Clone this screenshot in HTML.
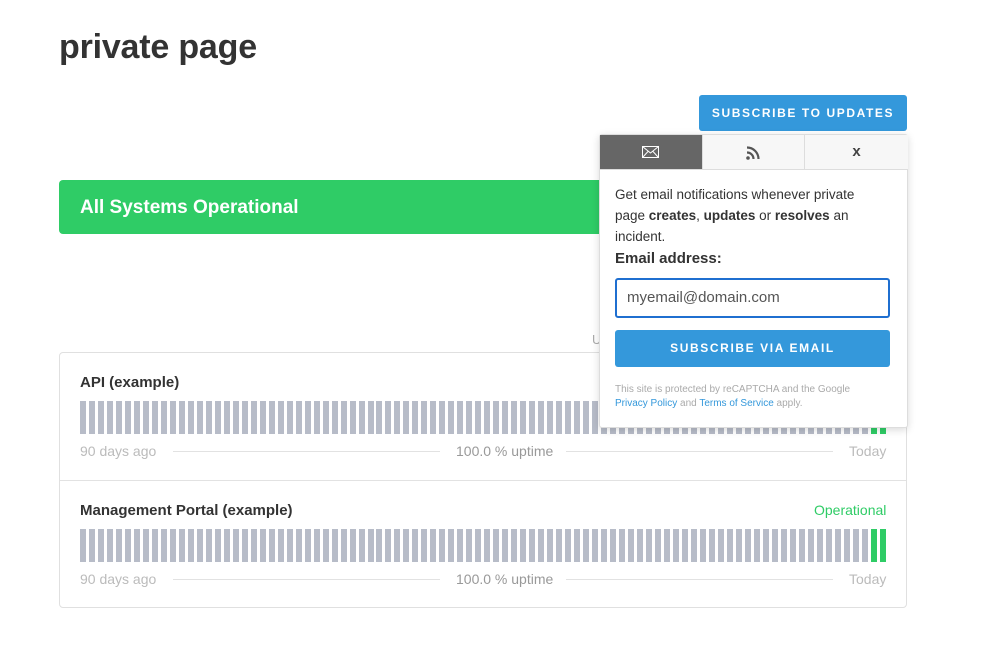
<!DOCTYPE html>
<html><head><meta charset="utf-8"><style>
body{margin:0;width:999px;height:658px;background:#fff;font-family:"Liberation Sans",sans-serif;position:relative;overflow:hidden;color:#333}
.a{position:absolute}
h1{position:absolute;left:59px;top:28px;margin:0;font-size:34px;font-weight:bold;color:#333;letter-spacing:-0.2px}
.btn{background:#3498db;color:#fff;font-weight:bold;letter-spacing:1.6px;text-align:center;border-radius:3px}
.bars{position:absolute;left:80px;width:806px;height:33px;display:flex;justify-content:space-between}
.bars span{width:6px;height:33px;background:#b7bcc8}
.bars span.g{background:#2fcc66}
.lbl{font-size:14px;color:#bbb}
.line{position:absolute;height:1px;background:#e2e2e2}
</style></head><body>
<h1>private page</h1>
<div class="a btn" style="left:699px;top:95px;width:208px;height:36px;line-height:36px;font-size:12px">SUBSCRIBE TO UPDATES</div>
<div class="a" style="left:59px;top:180px;width:848px;height:54px;background:#2fcc66;border-radius:4px"></div>
<div class="a" style="left:80px;top:197px;color:#fff;font-size:19px;font-weight:bold">All Systems Operational</div>
<div class="a" style="left:592px;top:332px;font-size:13px;color:#aaa">Uptime</div>
<div class="a" style="left:59px;top:352px;width:846px;height:254px;border:1px solid #e0e0e0;border-radius:4px"></div>
<div class="line" style="left:60px;top:480px;width:846px"></div>
<div class="a" style="left:80px;top:374px;font-size:15px;font-weight:bold">API (example)</div>
<div class="bars" id="b1" style="top:401px"></div>
<div class="a lbl" style="left:80px;top:443px">90 days ago</div>
<div class="line" style="left:173px;top:451px;width:267px"></div>
<div class="a lbl" style="left:456px;top:443px;color:#999">100.0 % uptime</div>
<div class="line" style="left:566px;top:451px;width:267px"></div>
<div class="a lbl" style="left:849px;top:443px">Today</div>
<div class="a" style="left:80px;top:502px;font-size:15px;font-weight:bold">Management Portal (example)</div>
<div class="a" style="left:814px;top:502px;font-size:14px;color:#2fcc66">Operational</div>
<div class="bars" id="b2" style="top:529px"></div>
<div class="a lbl" style="left:80px;top:571px">90 days ago</div>
<div class="line" style="left:173px;top:579px;width:267px"></div>
<div class="a lbl" style="left:456px;top:571px;color:#999">100.0 % uptime</div>
<div class="line" style="left:566px;top:579px;width:267px"></div>
<div class="a lbl" style="left:849px;top:571px">Today</div>

<div class="a" style="left:599px;top:134px;width:307px;height:292px;background:#fff;border:1px solid #ddd;border-radius:3px;box-shadow:0 2px 8px rgba(0,0,0,.15)">
 <div class="a" style="left:0;top:0;width:102px;height:34px;background:#666;border-bottom:1px solid #ddd">
  <svg class="a" style="left:42px;top:11px" width="17" height="12" viewBox="0 0 17 12"><rect x="0.5" y="0.5" width="16" height="11" fill="none" stroke="#fff"/><path d="M0.5 0.5L8.5 7L16.5 0.5M0.5 11.5L6 5.5M16.5 11.5L11 5.5" fill="none" stroke="#fff"/></svg>
 </div>
 <div class="a" style="left:102px;top:0;width:102px;height:34px;background:#f7f7f7;border-left:1px solid #ddd;border-bottom:1px solid #ddd">
  <svg class="a" style="left:43px;top:11px" width="14" height="14" viewBox="0 0 14 14"><circle cx="2" cy="12" r="1.8" fill="#555"/><path d="M1 6.5A6.5 6.5 0 0 1 7.5 13M1 1.5A11.5 11.5 0 0 1 12.5 13" fill="none" stroke="#555" stroke-width="2.2"/></svg>
 </div>
 <div class="a" style="left:204px;top:0;width:103px;height:34px;background:#f7f7f7;border-left:1px solid #ddd;border-bottom:1px solid #ddd;text-align:center;line-height:34px;font-weight:bold;font-size:15px;color:#444">x</div>
 <div class="a" style="left:15px;top:49px;width:250px;font-size:13.5px;line-height:21px;color:#333">Get email notifications whenever private page <b>creates</b>, <b>updates</b> or <b>resolves</b> an incident.</div>
 <div class="a" style="left:15px;top:115px;font-size:15px;font-weight:bold;color:#333">Email address:</div>
 <div class="a" style="left:15px;top:143px;width:275px;height:40px;box-sizing:border-box;border:2px solid #1f6fd0;border-radius:3px;font-size:15px;line-height:36px;color:#555;padding-left:10px">myemail@domain.com</div>
 <div class="a btn" style="left:15px;top:195px;width:275px;height:37px;line-height:37px;font-size:12px">SUBSCRIBE VIA EMAIL</div>
 <div class="a" style="left:15px;top:248px;width:265px;font-size:10px;line-height:14px;color:#aaa">This site is protected by reCAPTCHA and the Google <span style="color:#3498db">Privacy Policy</span> and <span style="color:#3498db">Terms of Service</span> apply.</div>
</div>
<script>
for(const id of ["b1","b2"]){let h="";for(let i=0;i<90;i++)h+='<span'+(i>=88?' class="g"':'')+'></span>';document.getElementById(id).innerHTML=h;}
</script>
</body></html>
